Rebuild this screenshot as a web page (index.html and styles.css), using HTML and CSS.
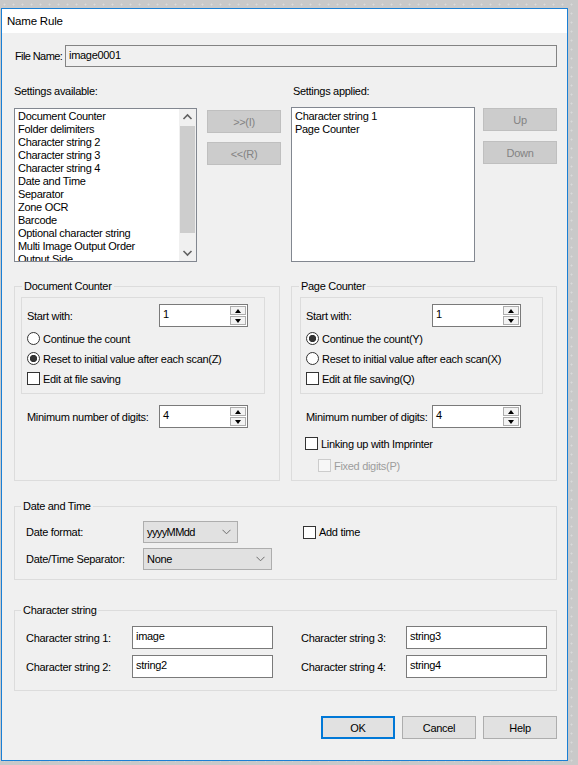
FILE: index.html
```html
<!DOCTYPE html>
<html>
<head>
<meta charset="utf-8">
<link rel="stylesheet" href="styles.css">
</head>
<body>
<div class="window">
  <div class="titlebar">Name Rule</div>
  <div class="body">
    <div class="file-row">
      <span class="file-lbl">File Name:</span>
      <div class="file-box">image0001</div>
    </div>

    <div class="lists">
      <div class="col col-left">
        <div class="cap">Settings available:</div>
        <div class="list-row">
          <div class="listbox lb-left">
            <div class="items">
              <div>Document Counter</div>
              <div>Folder delimiters</div>
              <div>Character string 2</div>
              <div>Character string 3</div>
              <div>Character string 4</div>
              <div>Date and Time</div>
              <div>Separator</div>
              <div>Zone OCR</div>
              <div>Barcode</div>
              <div>Optional character string</div>
              <div>Multi Image Output Order</div>
              <div>Output Side</div>
            </div>
            <div class="scrollbar">
              <div class="sb-arrow"><svg width="17" height="17" viewBox="0 0 17 17"><polyline points="4.5,10 8.5,6 12.5,10" fill="none" stroke="#606060" stroke-width="1.6"/></svg></div>
              <div class="sb-thumb"></div>
              <div class="sb-track"></div>
              <div class="sb-arrow"><svg width="17" height="17" viewBox="0 0 17 17"><polyline points="4.5,7 8.5,11 12.5,7" fill="none" stroke="#606060" stroke-width="1.6"/></svg></div>
            </div>
          </div>
          <div class="btncol btncol-left">
            <div class="btn disabled">&gt;&gt;(I)</div>
            <div class="btn disabled">&lt;&lt;(R)</div>
          </div>
        </div>
      </div>
      <div class="col col-right">
        <div class="cap cap-right">Settings applied:</div>
        <div class="list-row">
          <div class="listbox lb-right">
            <div class="items">
              <div>Character string 1</div>
              <div>Page Counter</div>
            </div>
          </div>
          <div class="btncol btncol-right">
            <div class="btn disabled">Up</div>
            <div class="btn disabled">Down</div>
          </div>
        </div>
      </div>
    </div>

    <div class="groups">
      <div class="group counter">
        <div class="legend">Document Counter</div>
        <div class="inner inner-doc">
          <div class="spin-row">
            <span class="spin-lbl lbl-doc">Start with:</span>
            <div class="spinner"><div class="spin-val">1</div><div class="spin-btns"><div class="spin-btn"><span class="tri-up"></span></div><div class="spin-btn"><span class="tri-down"></span></div></div></div>
          </div>
          <div class="opt opt-first"><span class="radio"></span><span class="opt-txt">Continue the count</span></div>
          <div class="opt"><span class="radio on"></span><span class="opt-txt">Reset to initial value after each scan(Z)</span></div>
          <div class="opt"><span class="check"></span><span class="opt-txt">Edit at file saving</span></div>
        </div>
        <div class="spin-row digits digits-doc">
          <span class="spin-lbl lbl-doc">Minimum number of digits:</span>
          <div class="spinner"><div class="spin-val">4</div><div class="spin-btns"><div class="spin-btn"><span class="tri-up"></span></div><div class="spin-btn"><span class="tri-down"></span></div></div></div>
        </div>
      </div>

      <div class="group counter">
        <div class="legend">Page Counter</div>
        <div class="inner inner-page">
          <div class="spin-row">
            <span class="spin-lbl lbl-page">Start with:</span>
            <div class="spinner"><div class="spin-val">1</div><div class="spin-btns"><div class="spin-btn"><span class="tri-up"></span></div><div class="spin-btn"><span class="tri-down"></span></div></div></div>
          </div>
          <div class="opt opt-first"><span class="radio on"></span><span class="opt-txt">Continue the count(Y)</span></div>
          <div class="opt"><span class="radio"></span><span class="opt-txt">Reset to initial value after each scan(X)</span></div>
          <div class="opt"><span class="check"></span><span class="opt-txt">Edit at file saving(Q)</span></div>
        </div>
        <div class="spin-row digits digits-page">
          <span class="spin-lbl lbl-page">Minimum number of digits:</span>
          <div class="spinner"><div class="spin-val">4</div><div class="spin-btns"><div class="spin-btn"><span class="tri-up"></span></div><div class="spin-btn"><span class="tri-down"></span></div></div></div>
        </div>
        <div class="opt link-row"><span class="check"></span><span class="opt-txt">Linking up with Imprinter</span></div>
        <div class="opt fixed-row"><span class="check off"></span><span class="opt-txt dim">Fixed digits(P)</span></div>
      </div>
    </div>

    <div class="group wide date-group">
      <div class="legend legend-wide">Date and Time</div>
      <div class="date-row date-first">
        <span class="date-lbl">Date format:</span>
        <div class="select sel-fmt"><span>yyyyMMdd</span><svg width="9" height="6" viewBox="0 0 9 6"><polyline points="0.5,0.8 4.5,4.8 8.5,0.8" fill="none" stroke="#6d6d6d" stroke-width="1"/></svg></div>
        <div class="opt addtime"><span class="check"></span><span class="opt-txt">Add time</span></div>
      </div>
      <div class="date-row">
        <span class="date-lbl">Date/Time Separator:</span>
        <div class="select sel-sep"><span>None</span><svg width="9" height="6" viewBox="0 0 9 6"><polyline points="0.5,0.8 4.5,4.8 8.5,0.8" fill="none" stroke="#6d6d6d" stroke-width="1"/></svg></div>
      </div>
    </div>

    <div class="group wide char-group">
      <div class="legend legend-wide">Character string</div>
      <div class="cs-row cs-first">
        <span class="cs-lbl">Character string 1:</span>
        <div class="textbox">image</div>
        <span class="cs-lbl cs-lbl-right">Character string 3:</span>
        <div class="textbox">string3</div>
      </div>
      <div class="cs-row">
        <span class="cs-lbl">Character string 2:</span>
        <div class="textbox">string2</div>
        <span class="cs-lbl cs-lbl-right">Character string 4:</span>
        <div class="textbox">string4</div>
      </div>
    </div>

    <div class="footer">
      <div class="btn action default">OK</div>
      <div class="btn action">Cancel</div>
      <div class="btn action">Help</div>
    </div>
  </div>
</div>
</body>
</html>
```

FILE: styles.css
```css
html, body {
  margin: 0;
  padding: 0;
}
body {
  width: 578px;
  height: 765px;
  overflow: hidden;
  background-color: #c9c9c9;
  background-image: radial-gradient(circle, #dadada 0.8px, transparent 1.2px);
  background-size: 9px 9px;
  font-family: "Liberation Sans", Arial, sans-serif;
  font-size: 11px;
  letter-spacing: -0.3px;
  color: #000;
}
.window {
  margin: 8px 0 0 1px;
  width: 567px;
  height: 753px;
  box-sizing: border-box;
  border: 1px solid #1a7fd5;
  background: #f0f0f0;
  display: flex;
  flex-direction: column;
}
.titlebar {
  height: 24px;
  background: #fff;
  padding-left: 5px;
  line-height: 24px;
  font-size: 11.5px;
  letter-spacing: -0.2px;
  flex: none;
}
.body {
  padding: 0 10px 0 12px;
  display: flex;
  flex-direction: column;
}

/* file row */
.file-row {
  margin-top: 12px;
  display: flex;
  height: 22px;
  align-items: center;
}
.file-lbl {
  width: 50px;
  padding-left: 1px;
  flex: none;
  white-space: nowrap;
  letter-spacing: -0.6px;
}
.file-box {
  width: 492px;
  height: 22px;
  box-sizing: border-box;
  border: 1px solid #838383;
  background: #f0f0f0;
  padding-left: 3px;
  line-height: 18px;
}

/* lists */
.lists {
  margin-top: 18px;
  display: flex;
  gap: 10px;
}
.col-left { width: 267px; }
.col-right { width: 266px; }
.cap {
  line-height: 13px;
  height: 13px;
}
.cap-right { padding-left: 2px; }
.list-row {
  margin-top: 9px;
  display: flex;
  align-items: flex-start;
}
.listbox {
  width: 184px;
  box-sizing: border-box;
  border: 1px solid #828790;
  background: #fff;
  display: flex;
  overflow: hidden;
}
.lb-left {
  margin-top: 1px;
  height: 154px;
}
.lb-right {
  height: 155px;
}
.items {
  flex: 1;
  padding: 1px 0 0 3px;
  line-height: 13px;
  white-space: nowrap;
  overflow: hidden;
}
.lb-right .items { padding-top: 2px; }
.scrollbar {
  width: 17px;
  flex: none;
  background: #f0f0f0;
  display: flex;
  flex-direction: column;
}
.sb-arrow {
  height: 17px;
  display: flex;
}
.sb-thumb {
  height: 107px;
  margin: 0 1px;
  background: #cdcdcd;
}
.sb-track { flex: 1; }

.btncol {
  display: flex;
  flex-direction: column;
}
.btncol-left {
  margin-left: 10px;
  margin-top: 3px;
  gap: 9px;
}
.btncol-right {
  margin-left: 8px;
  margin-top: 1px;
  gap: 10px;
}
.btn {
  width: 74px;
  height: 23px;
  box-sizing: border-box;
  display: flex;
  align-items: center;
  justify-content: center;
}
.btn.disabled {
  background: #cccccc;
  border: 1px solid #bfbfbf;
  color: #838383;
}

/* groups */
.groups {
  margin-top: 24px;
  display: flex;
  gap: 11px;
}
.group {
  border: 1px solid #dcdcdc;
  box-sizing: border-box;
  display: flex;
  flex-direction: column;
}
.counter {
  width: 266px;
  height: 195px;
}
.legend {
  align-self: flex-start;
  margin: -7px 0 0 7px;
  padding: 0 2px;
  background: #f0f0f0;
  line-height: 13px;
  height: 13px;
}
.legend-wide { margin-left: 6px; }
.inner {
  margin-top: 4px;
  height: 97px;
  box-sizing: border-box;
  border: 1px solid #dcdcdc;
  padding-left: 5px;
}
.inner-doc { margin-left: 6px; width: 244px; }
.inner-page { margin-left: 8px; width: 243px; padding-left: 5px; }

.spin-row {
  display: flex;
  align-items: center;
  margin-top: 6px;
  height: 23px;
}
.spin-lbl { flex: none; }
.lbl-doc { width: 132px; }
.lbl-page { width: 126px; }
.digits { margin-top: 11px; }
.digits-doc { margin-left: 12px; }
.digits-page { margin-left: 14px; }

.spinner {
  width: 89px;
  height: 23px;
  box-sizing: border-box;
  border: 1px solid #7a7a7a;
  background: #fff;
  display: flex;
}
.spin-val {
  flex: 1;
  padding-left: 3px;
  line-height: 19px;
}
.spin-btns {
  width: 17px;
  display: flex;
  flex-direction: column;
  gap: 1px;
  padding: 1px 1px 1px 0;
  box-sizing: border-box;
}
.spin-btn {
  flex: 1;
  border: 1px solid #adadad;
  background: #f3f3f3;
  display: flex;
  align-items: center;
  justify-content: center;
}
.tri-up {
  width: 0;
  height: 0;
  border-left: 3.5px solid transparent;
  border-right: 3.5px solid transparent;
  border-bottom: 4px solid #000;
}
.tri-down {
  width: 0;
  height: 0;
  border-left: 3.5px solid transparent;
  border-right: 3.5px solid transparent;
  border-top: 4px solid #000;
}

.opt {
  display: flex;
  align-items: center;
  height: 13px;
  margin-top: 7px;
  white-space: nowrap;
}
.opt-first { margin-top: 5px; }
.radio {
  width: 13px;
  height: 13px;
  box-sizing: border-box;
  border: 1px solid #333;
  border-radius: 50%;
  background: #fff;
  flex: none;
}
.radio.on {
  background: radial-gradient(circle, #333 3.3px, #fff 4px);
}
.check {
  width: 13px;
  height: 13px;
  box-sizing: border-box;
  border: 1px solid #333;
  background: #fff;
  flex: none;
}
.check.off {
  border-color: #cccccc;
  background: #f7f7f7;
}
.opt-txt { margin-left: 3px; }
.dim { color: #9d9d9d; }
.link-row { margin: 9px 0 0 13px; }
.fixed-row { margin: 9px 0 0 26px; }

/* wide groups */
.wide { width: 543px; }
.date-group {
  margin-top: 25px;
  height: 74px;
}
.date-row {
  display: flex;
  align-items: center;
  padding-left: 11px;
  margin-top: 5px;
  height: 22px;
}
.date-first { margin-top: 8px; }
.date-lbl { width: 117px; flex: none; }
.select {
  height: 22px;
  box-sizing: border-box;
  border: 1px solid #adadad;
  background: #e1e1e1;
  display: flex;
  align-items: center;
  justify-content: space-between;
  padding: 0 6px 0 3px;
}
.sel-fmt { width: 95px; letter-spacing: -0.6px; }
.sel-sep { width: 129px; }
.addtime { margin: 0 0 0 65px; }

.char-group {
  margin-top: 30px;
  height: 81px;
}
.cs-row {
  display: flex;
  align-items: center;
  padding-left: 11px;
  margin-top: 6px;
  height: 23px;
}
.cs-first { margin-top: 9px; }
.cs-lbl { width: 106px; flex: none; }
.cs-lbl-right { margin-left: 28px; width: 105px; }
.textbox {
  width: 141px;
  height: 23px;
  box-sizing: border-box;
  border: 1px solid #7a7a7a;
  background: #fff;
  padding-left: 3px;
  line-height: 19px;
}

/* footer */
.footer {
  margin-top: 25px;
  display: flex;
  justify-content: flex-end;
  gap: 7px;
}
.btn.action {
  background: #e1e1e1;
  border: 1px solid #adadad;
}
.btn.default {
  border: 2px solid #0078d7;
}
```
